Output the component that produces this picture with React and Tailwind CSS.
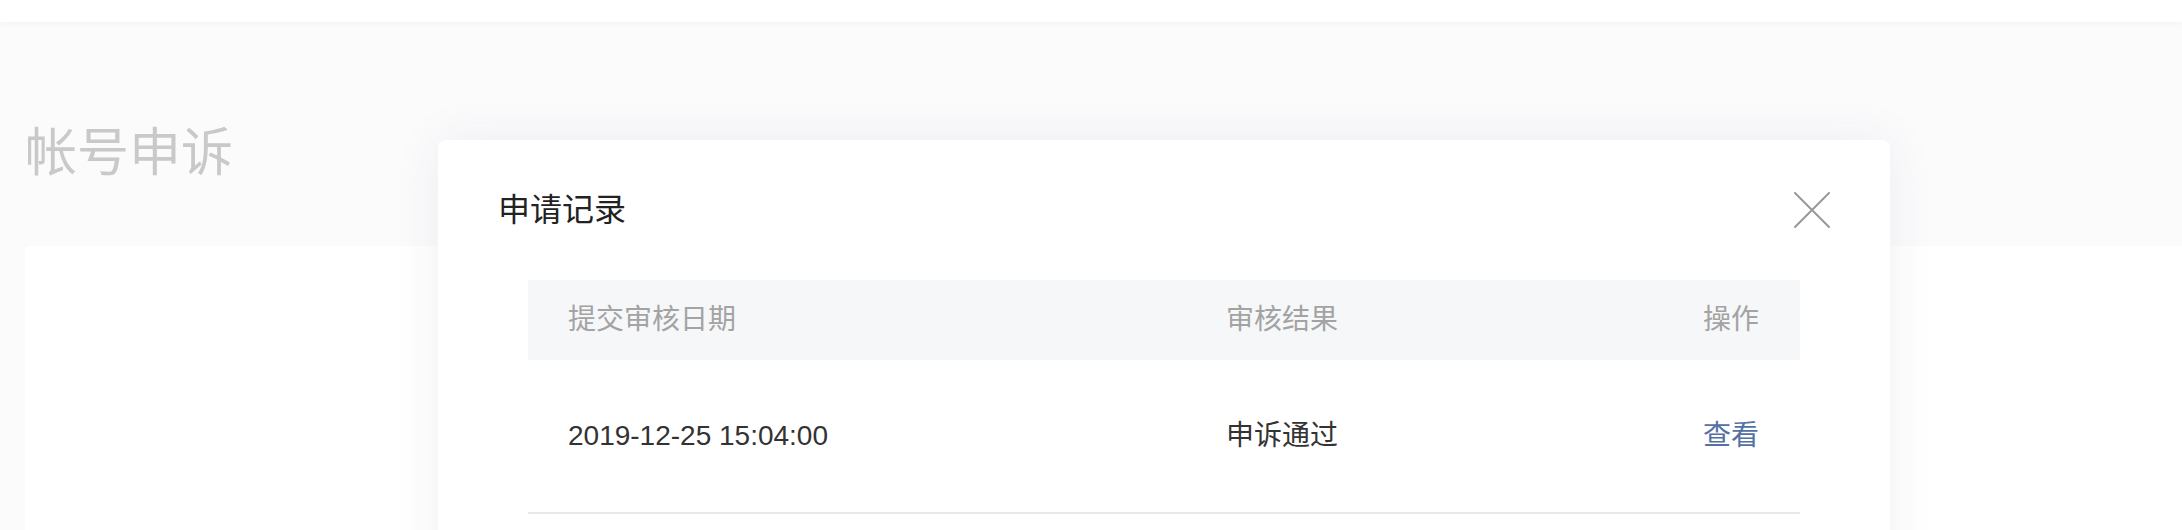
export default function App() {
  const rows = [{ date: '2019-12-25 15:04:00', result: '申诉通过' }];

  return (
    <div
      className="relative h-[530px] w-full overflow-hidden bg-[#fbfbfc]"
      style={{ fontFamily: '"Liberation Sans", "Noto Sans CJK SC", sans-serif' }}
    >
      {/* top bar */}
      <div className="relative z-10 h-[22px] bg-white shadow-[0_1px_6px_rgba(0,0,0,0.04)]" />

      {/* page */}
      <div className="pl-[25px]">
        <h1 className="mt-[105px] text-[52px] leading-[52px] font-normal text-[#c9c9c9]">帐号申诉</h1>
        <div className="mt-[67px] h-[400px] rounded-l-[4px] bg-white" />
      </div>

      {/* dialog */}
      <div className="absolute top-[140px] left-[438px] h-[460px] w-[1452px] rounded-[8px] bg-white px-[60px] pt-[54px] shadow-[0_0_50px_rgba(40,50,80,0.07)]">
        <div className="flex h-[32px] items-center justify-between">
          <h2 className="text-[32px] leading-[32px] font-normal text-[#222]">申请记录</h2>
          <button className="flex h-[36px] w-[36px] items-center justify-center">
            <svg width="36" height="36" viewBox="0 0 36 36" fill="none">
              <path d="M1 1L35 35M35 1L1 35" stroke="#999" strokeWidth="2" strokeLinecap="round" />
            </svg>
          </button>
        </div>

        <div className="mx-[30px] mt-[54px]">
          <div className="flex h-[80px] items-center bg-[#f6f7f9] text-[28px] text-[#a3a3a3]">
            <div className="w-[698px] pl-[40px]">提交审核日期</div>
            <div className="flex-1">审核结果</div>
            <div className="pr-[41px]">操作</div>
          </div>
          {rows.map((row) => (
            <div
              key={row.date}
              className="flex h-[154px] items-center border-b-2 border-[#e8e8eb] text-[28px] text-[#333]"
            >
              <div className="w-[698px] pl-[40px]">{row.date}</div>
              <div className="flex-1">{row.result}</div>
              <button className="pr-[41px] text-[#5470a4]">查看</button>
            </div>
          ))}
        </div>
      </div>
    </div>
  );
}
